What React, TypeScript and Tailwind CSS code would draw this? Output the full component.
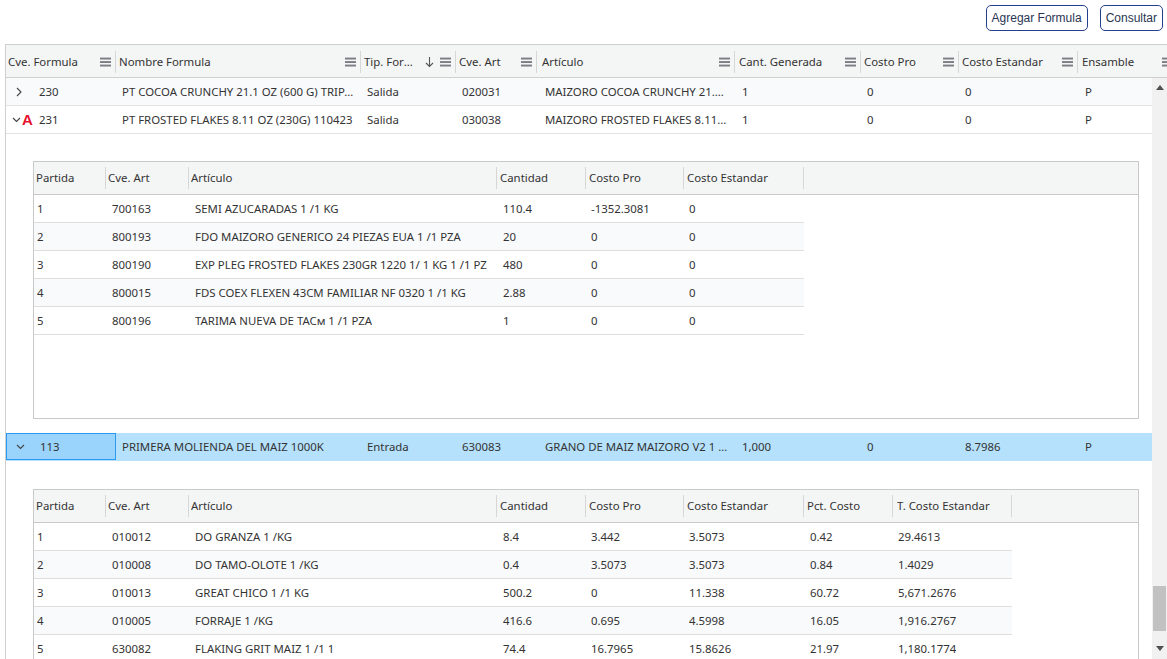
import React from "react";

const FONT = { fontFamily: '"Noto Sans", "Open Sans", sans-serif' };

const MenuIcon = () => (
  <svg width="11" height="10" viewBox="0 0 11 10" className="shrink-0">
    <rect x="0" y="0.6" width="11" height="1.9" fill="#7c7c84" />
    <rect x="0" y="4.1" width="11" height="1.9" fill="#7c7c84" />
    <rect x="0" y="7.6" width="11" height="1.9" fill="#7c7c84" />
  </svg>
);

const SortDown = () => (
  <svg width="9" height="12" viewBox="0 0 9 12" className="shrink-0 mr-[6px]">
    <path d="M4.5 1 V10.5 M1 7 L4.5 10.5 L8 7" stroke="#555" strokeWidth="1.1" fill="none" />
  </svg>
);

const ChevronRight = () => (
  <svg width="8" height="10" viewBox="0 0 8 10" className="shrink-0">
    <path d="M2 1 L6 5 L2 9" stroke="#444" strokeWidth="1.1" fill="none" />
  </svg>
);

const ChevronDown = () => (
  <svg width="9" height="8" viewBox="0 0 9 8" className="shrink-0">
    <path d="M1 2 L4.5 5.5 L8 2" stroke="#444" strokeWidth="1.1" fill="none" />
  </svg>
);

type Col = { label: string; w: string; sort?: boolean; pad: string };

const mainCols: Col[] = [
  { label: "Cve. Formula", w: "w-[110px]", pad: "pl-[2px]" },
  { label: "Nombre Formula", w: "w-[245px]", pad: "pl-[3px]" },
  { label: "Tip. Formula", w: "w-[95px]", sort: true, pad: "pl-[3px]" },
  { label: "Cve. Art", w: "w-[81px]", pad: "pl-[3px]" },
  { label: "Artículo", w: "w-[198px]", pad: "pl-[5px]" },
  { label: "Cant. Generada", w: "w-[126px]", pad: "pl-[4px]" },
  { label: "Costo Pro", w: "w-[98px]", pad: "pl-[3px]" },
  { label: "Costo Estandar", w: "w-[119px]", pad: "pl-[3px]" },
  { label: "Ensamble", w: "w-[100px]", pad: "pl-[4px]" },
];

const dataPads = [
  "pl-[6px]",
  "pl-[6px]",
  "pl-[6px]",
  "pl-[6px]",
  "pl-[8px]",
  "pl-[7px]",
  "pl-[6px]",
  "pl-[6px]",
  "pl-[7px]",
];

const subCols = [
  { label: "Partida", w: "w-[72px]", hp: "pl-[2px]", dp: "pl-[3px]" },
  { label: "Cve. Art", w: "w-[83px]", hp: "pl-[2px]", dp: "pl-[6px]" },
  { label: "Artículo", w: "w-[308px]", hp: "pl-[2px]", dp: "pl-[6px]" },
  { label: "Cantidad", w: "w-[89px]", hp: "pl-[3px]", dp: "pl-[6px]" },
  { label: "Costo Pro", w: "w-[98px]", hp: "pl-[3px]", dp: "pl-[5px]" },
  { label: "Costo Estandar", w: "w-[120px]", hp: "pl-[3px]", dp: "pl-[5px]" },
  { label: "Pct. Costo", w: "w-[89px]", hp: "pl-[3px]", dp: "pl-[6px]" },
  { label: "T. Costo Estandar", w: "w-[119px]", hp: "pl-[4px]", dp: "pl-[5px]" },
];

const sub1 = [
  ["1", "700163", "SEMI AZUCARADAS 1 /1 KG", "110.4", "-1352.3081", "0"],
  ["2", "800193", "FDO MAIZORO GENERICO 24 PIEZAS EUA 1 /1 PZA", "20", "0", "0"],
  ["3", "800190", "EXP PLEG FROSTED FLAKES 230GR 1220 1/ 1 KG 1 /1 PZ", "480", "0", "0"],
  ["4", "800015", "FDS COEX FLEXEN 43CM FAMILIAR NF 0320 1 /1 KG", "2.88", "0", "0"],
  ["5", "800196", "TARIMA NUEVA DE TACм 1 /1 PZA", "1", "0", "0"],
];

const sub2 = [
  ["1", "010012", "DO GRANZA 1 /KG", "8.4", "3.442", "3.5073", "0.42", "29.4613"],
  ["2", "010008", "DO TAMO-OLOTE 1 /KG", "0.4", "3.5073", "3.5073", "0.84", "1.4029"],
  ["3", "010013", "GREAT CHICO 1 /1 KG", "500.2", "0", "11.338", "60.72", "5,671.2676"],
  ["4", "010005", "FORRAJE 1 /KG", "416.6", "0.695", "4.5998", "16.05", "1,916.2767"],
  ["5", "630082", "FLAKING GRIT MAIZ 1 /1 1", "74.4", "16.7965", "15.8626", "21.97", "1,180.1774"],
];

function SubGrid({ ncols, rows, height }: { ncols: number; rows: string[][]; height: string }) {
  const cols = subCols.slice(0, ncols);
  return (
    <div className={`border border-[#c9c9c9] ${height} overflow-hidden bg-white`}>
      <div className="flex h-[33px] bg-[#f4f5f5] border-b border-[#c9c9c9]">
        {cols.map((c) => (
          <div key={c.label} className={`${c.w} shrink-0 flex items-center ${c.hp}`}>
            <span className="flex-1 truncate">{c.label}</span>
            <span className="w-px h-[22px] bg-[#d6d6d6]" />
          </div>
        ))}
      </div>
      {rows.map((r, i) => (
        <div
          key={i}
          className={`flex h-[28px] border-b border-[#dedede] w-fit ${i % 2 === 1 ? "bg-[#f9fafc]" : "bg-white"}`}
        >
          {cols.map((c, j) => (
            <div key={j} className={`${c.w} shrink-0 flex items-center ${c.dp} pr-[2px] min-w-0`}>
              <span className="truncate">{r[j]}</span>
            </div>
          ))}
        </div>
      ))}
    </div>
  );
}

function MainRow({
  cells,
  icon,
  bg,
  selected,
}: {
  cells: string[];
  icon: React.ReactNode;
  bg: string;
  selected?: boolean;
}) {
  return (
    <div className={`flex h-[28px] border-b ${selected ? "border-[#b5e1fc]" : "border-[#e2e2e2]"} ${bg}`}>
      {mainCols.map((c, j) => {
        if (j === 0) {
          return (
            <div
              key={j}
              className={`${c.w} shrink-0 flex items-center ${
                selected ? "bg-[#9ad3fb] border border-[#2b9af0]" : ""
              }`}
            >
              <div className="w-[33px] shrink-0 flex items-center pl-[9px]">{icon}</div>
              <span>{cells[0]}</span>
            </div>
          );
        }
        return (
          <div key={j} className={`${c.w} shrink-0 flex items-center ${dataPads[j]} pr-[6px] min-w-0`}>
            <span className="truncate">{cells[j]}</span>
          </div>
        );
      })}
    </div>
  );
}

export default function App() {
  return (
    <div className="w-[1167px] h-[659px] overflow-hidden bg-white text-[11.4px] text-[#333]" style={FONT}>
      <div className="h-[44px] flex justify-end items-start pt-[5px] pr-[4px] gap-[12px]">
        <button
          className="h-[26px] px-[5px] border border-[#27408b] rounded-[5px] text-[#2a3552] text-[12px] bg-white"
          style={{ fontFamily: '"Liberation Sans", Arial, sans-serif' }}
        >
          Agregar Formula
        </button>
        <button
          className="h-[26px] px-[5px] border border-[#27408b] rounded-[5px] text-[#2a3552] text-[12px] bg-white"
          style={{ fontFamily: '"Liberation Sans", Arial, sans-serif' }}
        >
          Consultar
        </button>
      </div>

      <div className="ml-[5px] border-l border-t border-[#cfcfcf] h-[615px] flex flex-col overflow-hidden">
        <div className="flex h-[33px] shrink-0 bg-[#f4f5f5] border-b border-[#cfcfcf] pt-[1px]">
          {mainCols.map((c) => (
            <div key={c.label} className={`${c.w} shrink-0 flex items-center ${c.pad}`}>
              <span className="flex-1 truncate pr-[4px]">{c.label}</span>
              {c.sort && <SortDown />}
              <MenuIcon />
              <span className="w-px h-[22px] bg-[#d6d6d6] ml-[4px]" />
            </div>
          ))}
        </div>

        <div className="flex flex-1 min-h-0">
          <div className="w-[1146px] shrink-0 overflow-hidden">
            <MainRow
              bg="bg-[#f9fafc]"
              icon={<ChevronRight />}
              cells={[
                "230",
                "PT COCOA CRUNCHY 21.1 OZ (600 G) TRIPACK 110423",
                "Salida",
                "020031",
                "MAIZORO COCOA CRUNCHY 21.1 OZ (600 G)",
                "1",
                "0",
                "0",
                "P",
              ]}
            />
            <MainRow
              bg="bg-white"
              icon={
                <div className="flex items-center -ml-[3px]">
                  <ChevronDown />
                  <span
                    className="text-[#e8112d] font-bold text-[15px] leading-none ml-[1px]"
                    style={{ fontFamily: '"Liberation Sans", Arial, sans-serif' }}
                  >
                    A
                  </span>
                </div>
              }
              cells={[
                "231",
                "PT FROSTED FLAKES 8.11 OZ (230G) 110423",
                "Salida",
                "030038",
                "MAIZORO FROSTED FLAKES 8.11 OZ (230G)",
                "1",
                "0",
                "0",
                "P",
              ]}
            />
            <div className="pt-[27px] pb-[14px] pl-[27px] pr-[13px]">
              <SubGrid ncols={6} rows={sub1} height="h-[258px]" />
            </div>
            <MainRow
              selected
              bg="bg-[#b5e1fc]"
              icon={<ChevronDown />}
              cells={[
                "113",
                "PRIMERA MOLIENDA DEL MAIZ 1000K",
                "Entrada",
                "630083",
                "GRANO DE MAIZ MAIZORO V2 1 /1 KG",
                "1,000",
                "0",
                "8.7986",
                "P",
              ]}
            />
            <div className="pt-[28px] pl-[27px] pr-[13px]">
              <SubGrid ncols={8} rows={sub2} height="h-[258px]" />
            </div>
          </div>

          <div className="w-[15px] shrink-0 bg-[#f1f1f1] flex flex-col items-center justify-between pt-[7px] pb-[8px] relative">
            <svg width="8" height="5" viewBox="0 0 8 5">
              <path d="M0 5 L4 0 L8 5 Z" fill="#505050" />
            </svg>
            <div className="absolute left-[1px] right-[1px] top-[508px] h-[45px] bg-[#c1c1c1]" />
            <svg width="8" height="5" viewBox="0 0 8 5">
              <path d="M0 0 L4 5 L8 0 Z" fill="#505050" />
            </svg>
          </div>
        </div>
      </div>
    </div>
  );
}
